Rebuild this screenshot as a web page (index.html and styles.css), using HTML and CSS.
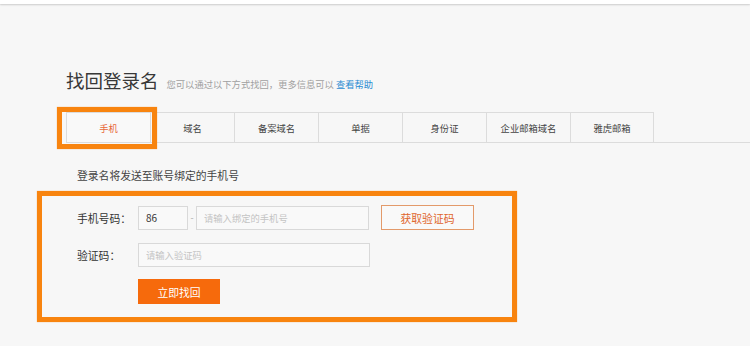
FILE: index.html
```html
<!DOCTYPE html>
<html lang="zh-CN">
<head>
<meta charset="utf-8">
<title>找回登录名</title>
<link rel="stylesheet" href="styles.css">
</head>
<body>
<div class="topbar"></div>
<div class="page">
  <div class="head">
    <h1 class="title">找回登录名</h1>
    <span class="sub">您可以通过以下方式找回，更多信息可以 <a class="help" href="#">查看帮助</a></span>
  </div>
  <div class="tabs">
    <div class="tab active">手机</div>
    <div class="tab">域名</div>
    <div class="tab">备案域名</div>
    <div class="tab">单据</div>
    <div class="tab">身份证</div>
    <div class="tab">企业邮箱域名</div>
    <div class="tab last">雅虎邮箱</div>
  </div>
  <p class="desc">登录名将发送至账号绑定的手机号</p>
  <form class="form">
    <div class="row">
      <label class="lbl">手机号码：</label>
      <input class="inp code" type="text" value="86">
      <span class="dash">-</span>
      <input class="inp phone" type="text" placeholder="请输入绑定的手机号">
      <button class="getcode" type="button">获取验证码</button>
    </div>
    <div class="row">
      <label class="lbl">验证码：</label>
      <input class="inp vcode" type="text" placeholder="请输入验证码">
    </div>
    <div class="row">
      <span class="lbl"></span>
      <button class="submit" type="button">立即找回</button>
    </div>
  </form>
  <div class="mark mark-tab"></div>
  <div class="mark mark-form"></div>
</div>
</body>
</html>
```
FILE: styles.css
```css
html, body {
  margin: 0;
  padding: 0;
  background: #f7f7f7;
  font-family: "Noto Sans CJK SC", "Liberation Sans", sans-serif;
  color: #333;
  overflow: hidden;
  height: 346px;
}
.topbar {
  height: 4px;
  background: #fff;
  box-shadow: 0 1px 2px rgba(0,0,0,0.18);
}
.page {
  position: relative;
  padding: 64px 0 0 66px;
}
.head {
  display: flex;
  align-items: baseline;
  height: 24px;
}
.title {
  margin: 0;
  font-size: 18.5px;
  font-weight: normal;
  line-height: 24px;
  color: #383838;
}
.sub {
  margin-left: 8px;
  font-size: 9.3px;
  color: #a0a0a0;
}
.help {
  color: #2a8bd2;
  text-decoration: none;
}
.tabs {
  display: flex;
  margin-top: 20px;
  border-bottom: 1px solid #dcdcdc;
}
.tab {
  box-sizing: border-box;
  width: 84px;
  height: 30px;
  border-top: 1px solid #dcdcdc;
  border-left: 1px solid #dcdcdc;
  display: flex;
  align-items: center;
  justify-content: center;
  font-size: 9.3px;
  color: #444;
}
.tab.last {
  border-right: 1px solid #dcdcdc;
}
.tab.active {
  color: #e8683a;
  background: #f9f9f9;
}
.desc {
  margin: 24px 0 0 0;
  padding-left: 11px;
  font-size: 10.8px;
  line-height: 16px;
  color: #444;
}
.form {
  margin-top: 22px;
  padding-left: 11px;
  display: flex;
  flex-direction: column;
  gap: 12px;
}
.row {
  display: flex;
  align-items: center;
  height: 25px;
}
.lbl {
  width: 61px;
  flex: none;
  font-size: 10.8px;
  color: #333;
}
.inp {
  box-sizing: border-box;
  height: 24px;
  margin: 0;
  border: 1px solid #d9d9d9;
  background: #f9f9f9;
  padding: 0 0 0 7px;
  font-family: inherit;
  font-size: 10px;
  color: #333;
  outline: none;
}
.inp::placeholder {
  color: #c4c4c4;
  font-size: 9.3px;
}
.code {
  width: 50px;
}
.dash {
  width: 8px;
  text-align: center;
  font-size: 9px;
  color: #aaa;
}
.phone {
  width: 173px;
}
.vcode {
  width: 232px;
}
.getcode {
  box-sizing: border-box;
  margin-left: 12px;
  width: 93px;
  height: 25px;
  border: 1px solid #e39a6a;
  background: #f9f9f9;
  color: #e0652c;
  font-family: inherit;
  font-size: 10.8px;
  padding: 0;
}
.submit {
  box-sizing: border-box;
  width: 82px;
  height: 25px;
  border: none;
  background: #f66a0c;
  color: #fff;
  font-family: inherit;
  font-size: 10.8px;
  padding: 0;
}
.mark {
  position: absolute;
  box-sizing: border-box;
  border: 5px solid #f8840f;
  box-shadow: 0 0 1px rgba(248,132,15,0.6);
}
.mark-tab {
  left: 57px;
  top: 103px;
  width: 100px;
  height: 42px;
}
.mark-form {
  left: 37px;
  top: 187px;
  width: 480px;
  height: 131px;
}
```
